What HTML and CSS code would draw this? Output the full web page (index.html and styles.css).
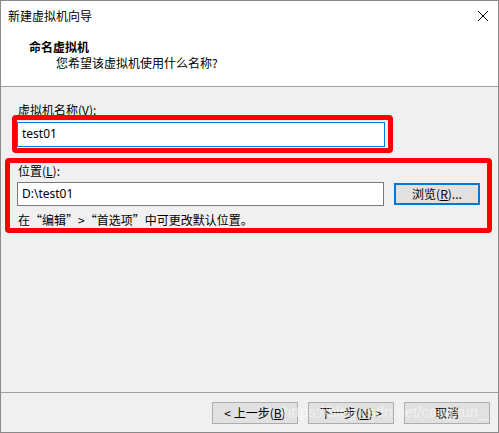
FILE: index.html
```html
<!DOCTYPE html>
<html lang="zh-CN">
<head>
<meta charset="utf-8">
<title>新建虚拟机向导</title>
<link rel="stylesheet" href="styles.css">
</head>
<body>
<div class="window">
  <div class="titlebar">
    <span class="title">新建虚拟机向导</span>
    <svg class="close" width="12" height="12" viewBox="0 0 12 12"><path d="M1 1 L11 11 M11 1 L1 11" stroke="#000" stroke-width="1" fill="none"/></svg>
  </div>
  <div class="header">
    <div class="h-title">命名虚拟机</div>
    <div class="h-sub">您希望该虚拟机使用什么名称?</div>
  </div>
  <div class="content">
    <div class="label">虚拟机名称(<u>V</u>):</div>
    <div class="input focused">test01</div>
    <div class="label label2">位置(<u>L</u>):</div>
    <div class="row">
      <div class="input path">D:\test01</div>
      <div class="btn browse">浏览(<u>R</u>)...</div>
    </div>
    <div class="hint">在“编辑”&gt;“首选项”中可更改默认位置。</div>
  </div>
  <div class="footer">
    <div class="btn">&lt; 上一步(<u>B</u>)</div>
    <div class="btn">下一步(<u>N</u>) &gt;</div>
    <div class="btn">取消</div>
  </div>
  <div class="mark mark1"></div>
  <div class="mark mark2"></div>
  <div class="watermark">https://blog.csdn.net/caogxun_</div>
</div>
</body>
</html>
```
FILE: styles.css
```css
* { box-sizing: border-box; }
html, body { margin: 0; padding: 0; }
body {
  font-family: "Noto Sans CJK SC", "Noto Sans", sans-serif;
  font-size: 12px;
  color: #000;
  background: #fff;
}
.window {
  position: relative;
  width: 499px;
  height: 433px;
  border: 1px solid #8a8a8a;
  display: flex;
  flex-direction: column;
  background: #f0f0f0;
  overflow: hidden;
}
.titlebar {
  height: 29px;
  background: #fff;
  display: flex;
  align-items: center;
  justify-content: space-between;
  padding: 0 9px 0 7px;
}
.title { line-height: 16px; }
.close { display: block; }
.header {
  background: #fff;
  height: 57px;
  border-bottom: 1px solid #a0a0a0;
  padding: 9px 0 0 28px;
}
.h-title { font-weight: bold; line-height: 16px; }
.h-sub { line-height: 16px; padding-left: 27px; }
.content {
  flex: 1;
  padding: 15px 12px 0 16px;
}
.label { line-height: 16px; padding-left: 1px; }
.input {
  height: 24px;
  width: 368px;
  background: #fff;
  border: 1px solid #7a7a7a;
  font-family: "Noto Sans", "Liberation Sans", sans-serif;
  font-size: 12px;
  line-height: 22px;
  padding-left: 4px;
}
.input.focused { border-color: #0078d7; height: 25px; margin-top: 4px; }
.label2 { margin-top: 16px; }
.row { display: flex; align-items: flex-start; gap: 10px; margin-top: 3px; }
.row .input { width: 367px; }
.btn {
  width: 86px;
  height: 22px;
  background: #e1e1e1;
  border: 1px solid #adadad;
  text-align: center;
  line-height: 20px;
}
.browse { margin-top: 1px; border: 2px solid #0078d7; line-height: 18px; }
.hint { margin-top: 6px; line-height: 16px; padding-left: 1px; }
.footer {
  height: 40px;
  border-top: 1px solid #a0a0a0;
  display: flex;
  justify-content: flex-end;
  gap: 10px;
  padding: 9px 8px 0 0;
}
.mark {
  position: absolute;
  border: 5px solid #ff0000;
  border-radius: 4px;
}
.mark1 { left: 11px; top: 114px; width: 381px; height: 38px; }
.mark2 { left: 4px; top: 157px; width: 487px; height: 75px; }
.watermark {
  position: absolute;
  left: 282px;
  top: 402px;
  font-family: "Liberation Sans", sans-serif;
  font-size: 15px;
  color: rgba(255,255,255,0.55);
  pointer-events: none;
}
u { text-decoration: underline; }
```
